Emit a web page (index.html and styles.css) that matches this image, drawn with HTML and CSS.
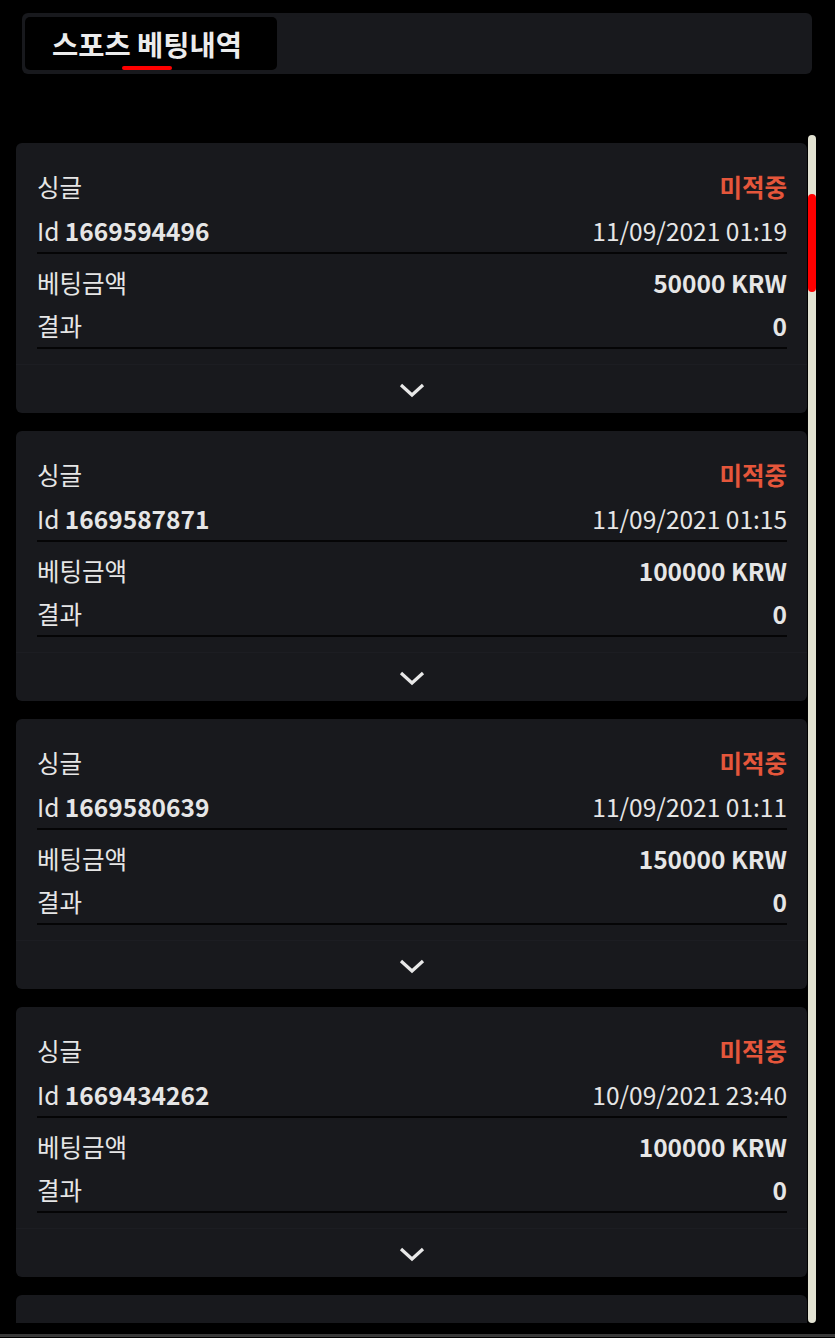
FILE: index.html
```html
<!DOCTYPE html>
<html>
<head>
    <title>스포츠 베팅내역</title>
    <link rel="stylesheet" href="styles.css">
</head>
<body>
    <div class="header">
        <div class="tab">
            <p class="tab-title">스포츠 베팅내역</p>
            <span class="tab-line"></span>
        </div>
    </div>

    <div class="main">
        <div class="list">
            <div class="card">
                <div class="sect top">
                    <div class="row"><span>싱글</span><span class="lost">미적중</span></div>
                    <div class="row"><span>Id <b>1669594496</b></span><span>11/09/2021 01:19</span></div>
                </div>
                <div class="sect">
                    <div class="row"><span>베팅금액</span><b>50000 KRW</b></div>
                    <div class="row"><span>결과</span><b>0</b></div>
                </div>
                <div class="more">
                    <svg width="28" height="16" viewBox="0 0 28 16"><path d="M3 3 L14 13 L25 3" fill="none" stroke="#e8e8e8" stroke-width="3.2"/></svg>
                </div>
            </div>

            <div class="card">
                <div class="sect top">
                    <div class="row"><span>싱글</span><span class="lost">미적중</span></div>
                    <div class="row"><span>Id <b>1669587871</b></span><span>11/09/2021 01:15</span></div>
                </div>
                <div class="sect">
                    <div class="row"><span>베팅금액</span><b>100000 KRW</b></div>
                    <div class="row"><span>결과</span><b>0</b></div>
                </div>
                <div class="more">
                    <svg width="28" height="16" viewBox="0 0 28 16"><path d="M3 3 L14 13 L25 3" fill="none" stroke="#e8e8e8" stroke-width="3.2"/></svg>
                </div>
            </div>

            <div class="card">
                <div class="sect top">
                    <div class="row"><span>싱글</span><span class="lost">미적중</span></div>
                    <div class="row"><span>Id <b>1669580639</b></span><span>11/09/2021 01:11</span></div>
                </div>
                <div class="sect">
                    <div class="row"><span>베팅금액</span><b>150000 KRW</b></div>
                    <div class="row"><span>결과</span><b>0</b></div>
                </div>
                <div class="more">
                    <svg width="28" height="16" viewBox="0 0 28 16"><path d="M3 3 L14 13 L25 3" fill="none" stroke="#e8e8e8" stroke-width="3.2"/></svg>
                </div>
            </div>

            <div class="card">
                <div class="sect top">
                    <div class="row"><span>싱글</span><span class="lost">미적중</span></div>
                    <div class="row"><span>Id <b>1669434262</b></span><span>10/09/2021 23:40</span></div>
                </div>
                <div class="sect">
                    <div class="row"><span>베팅금액</span><b>100000 KRW</b></div>
                    <div class="row"><span>결과</span><b>0</b></div>
                </div>
                <div class="more">
                    <svg width="28" height="16" viewBox="0 0 28 16"><path d="M3 3 L14 13 L25 3" fill="none" stroke="#e8e8e8" stroke-width="3.2"/></svg>
                </div>
            </div>

            <!-- next card, only its top shows -->
            <div class="card empty"></div>
        </div>
        <div class="track"><div class="thumb"></div></div>
    </div>
    <div class="bottom"></div>
</body>
</html>
```

FILE: styles.css
```css
body {
    font-family: "Noto Sans CJK KR", "Noto Sans", sans-serif;
    margin: 0;
    padding: 13px 0 0 0;
    background-color: #000;
    color: #e6e6e6;
}
p {
    margin: 0;
}

.header {
    margin: 0 23px 0 22px;
    height: 61px;
    padding: 4px 3px;
    box-sizing: border-box;
    background-color: #18191d;
    border-radius: 6px;
}
.tab {
    width: 252px;
    height: 53px;
    background-color: #000;
    border-radius: 5px;
    display: flex;
    flex-direction: column;
    align-items: center;
}
.tab-title {
    font-size: 28.5px;
    font-weight: bold;
    line-height: 36px;
    margin-top: 9px;
    margin-right: 8px;
    color: #ececec;
}
.tab-line {
    width: 50px;
    height: 4px;
    margin-top: 4px;
    margin-right: 8px;
    background-color: #ff0000;
    border-radius: 2px;
}

.main {
    display: flex;
    margin-top: 61px;
    padding-left: 16px;
    height: 1188px;
    overflow: hidden;
}
.list {
    width: 791px;
    padding-top: 8px;
    display: flex;
    flex-direction: column;
    gap: 18px;
}
.track {
    width: 8px;
    margin-left: 1px;
    background-color: #e2e2d2;
    border-radius: 4px;
    height: 1188px;
}
.thumb {
    margin-top: 59px;
    height: 98px;
    background-color: #ff0000;
    border-radius: 4px;
}

.card {
    background-color: #18191d;
    border-radius: 6px;
    flex-shrink: 0;
}
.card.empty {
    height: 270px;
}
.sect {
    margin: 0 20px 0 21px;
    padding-top: 7px;
    border-bottom: 2px solid #050506;
}
.sect.top {
    padding-top: 21px;
}
.sect.top .row {
    height: 44px;
}
.row {
    display: flex;
    justify-content: space-between;
    align-items: center;
    height: 43px;
    font-size: 24.5px;
}
.row b {
    font-weight: bold;
}
.lost {
    color: #e5563b;
    font-weight: bold;
}
.more {
    margin-top: 15px;
    height: 48px;
    border-top: 1px solid #1c1d22;
    display: flex;
    justify-content: center;
    align-items: center;
}
.more svg {
    margin-top: 1px;
}

.bottom {
    margin-top: 11px;
    height: 3px;
    background-color: #3a3a3a;
}
```
